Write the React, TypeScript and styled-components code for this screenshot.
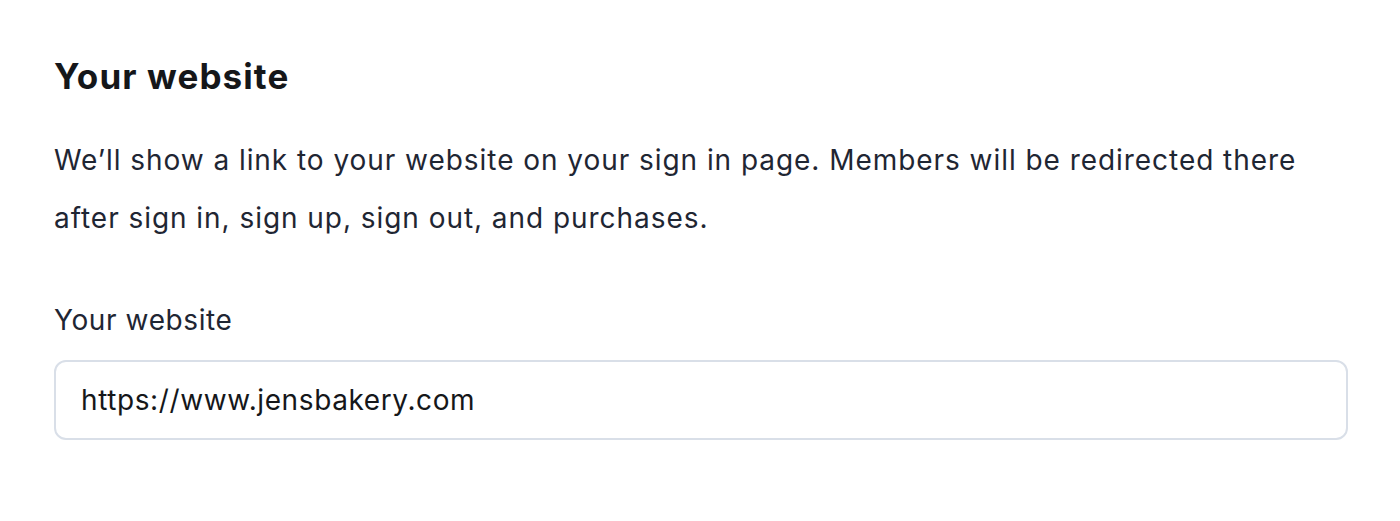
import React from "react";
import styled, { createGlobalStyle } from "styled-components";

const GlobalStyle = createGlobalStyle`
  html, body {
    margin: 0;
    padding: 0;
    background: #ffffff;
  }
  body {
    font-family: Inter, "Noto Sans", sans-serif;
    -webkit-font-smoothing: antialiased;
  }
`;

const Section = styled.section`
  display: flex;
  flex-direction: column;
  padding: 54px 52px 0 54px;
  max-width: 1294px;
`;

const Title = styled.h2`
  margin: 0;
  font-size: 35px;
  line-height: 44px;
  font-weight: 700;
  letter-spacing: 1.1px;
  color: #15171a;
`;

const Description = styled.p`
  margin: 33px 0 0;
  max-width: 1262px;
  font-size: 28px;
  line-height: 58px;
  letter-spacing: 0.95px;
  color: #1f2633;
`;

const Field = styled.div`
  display: flex;
  flex-direction: column;
  margin-top: 55px;
  gap: 22px;
`;

const Label = styled.label`
  font-size: 28px;
  line-height: 36px;
  letter-spacing: 0.6px;
  color: #1f2633;
`;

const Input = styled.input`
  box-sizing: border-box;
  width: 100%;
  height: 80px;
  padding: 0 25px;
  border: 2px solid #d9dfe8;
  border-radius: 12px;
  font-family: inherit;
  font-size: 28px;
  letter-spacing: 0.6px;
  color: #15171a;
  background: #ffffff;
  outline: none;
`;

export default function App() {
  return (
    <>
      <GlobalStyle />
      <Section>
        <Title>Your website</Title>
        <Description>
          We’ll show a link to your website on your sign in page. Members will be redirected there
          after sign in, sign up, sign out, and purchases.
        </Description>
        <Field>
          <Label htmlFor="website">Your website</Label>
          <Input id="website" type="text" defaultValue="https://www.jensbakery.com" />
        </Field>
      </Section>
    </>
  );
}
